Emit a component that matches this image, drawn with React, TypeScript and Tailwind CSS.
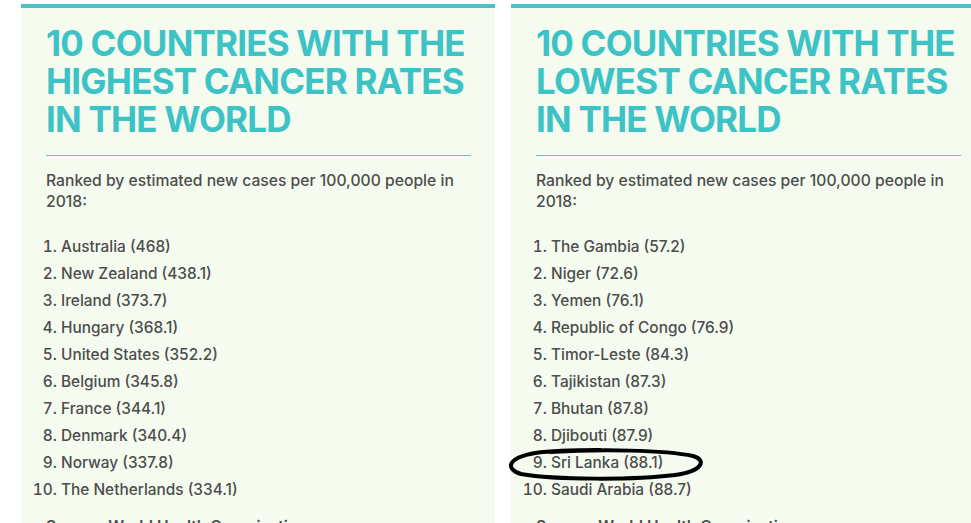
const highest = [
  "Australia (468)",
  "New Zealand (438.1)",
  "Ireland (373.7)",
  "Hungary (368.1)",
  "United States (352.2)",
  "Belgium (345.8)",
  "France (344.1)",
  "Denmark (340.4)",
  "Norway (337.8)",
  "The Netherlands (334.1)",
];

const lowest = [
  "The Gambia (57.2)",
  "Niger (72.6)",
  "Yemen (76.1)",
  "Republic of Congo (76.9)",
  "Timor-Leste (84.3)",
  "Tajikistan (87.3)",
  "Bhutan (87.8)",
  "Djibouti (87.9)",
  "Sri Lanka (88.1)",
  "Saudi Arabia (88.7)",
];

function Card({ kind, items, circled }: { kind: string; items: string[]; circled?: number }) {
  return (
    <div className="w-[474px] shrink-0 border-t-4 border-[#4cc2c4] bg-[#f5fcef] px-[25px] pt-[16px]">
      {/* Title */}
      <h2 className="whitespace-nowrap text-[35px] font-bold leading-[38px] tracking-[-0.8px] text-[#3dc3c6]">
        10 COUNTRIES WITH THE
        <br />
        {kind} CANCER RATES
        <br />
        IN THE WORLD
      </h2>
      <div className="mt-[17px] h-px w-[425px] bg-[#5cc4ca]" />

      <p className="mt-[14px] w-[420px] text-[15.7px] font-medium leading-[21px] text-[#4d4d4d]">
        Ranked by estimated new cases per 100,000 people in 2018:
      </p>

      <ol className="mt-[21px] list-decimal pl-[15px] text-[15.4px] font-medium leading-[27px] text-[#4d4d4d]">
        {items.map((item, i) => (
          <li key={item} className="relative">
            {item}
            {circled === i && (
              <svg
                className="absolute left-[-46px] top-[-1px] h-[33px] w-[200px]"
                viewBox="0 0 200 33"
                fill="none"
              >
                <path
                  d="M45 4 C 95 1, 160 2, 188 8 C 202 12, 198 23, 170 27 C 130 32, 50 32, 16 26 C 0 21, 2 10, 30 5 C 50 2, 70 2, 95 2"
                  stroke="#000"
                  strokeWidth="4"
                  strokeLinecap="round"
                />
              </svg>
            )}
          </li>
        ))}
      </ol>

      <p className="mt-[12px] text-[15.6px] font-semibold text-[#4d4d4d]">Source: World Health Organization</p>
    </div>
  );
}

export default function App() {
  return (
    <div
      className="flex h-[523px] w-[971px] gap-[16px] overflow-hidden bg-white pl-[21px] pt-[4px]"
      style={{ fontFamily: "Inter, 'Noto Sans', sans-serif" }}
    >
      <Card kind="HIGHEST" items={highest} />
      <Card kind="LOWEST" items={lowest} circled={8} />
    </div>
  );
}
